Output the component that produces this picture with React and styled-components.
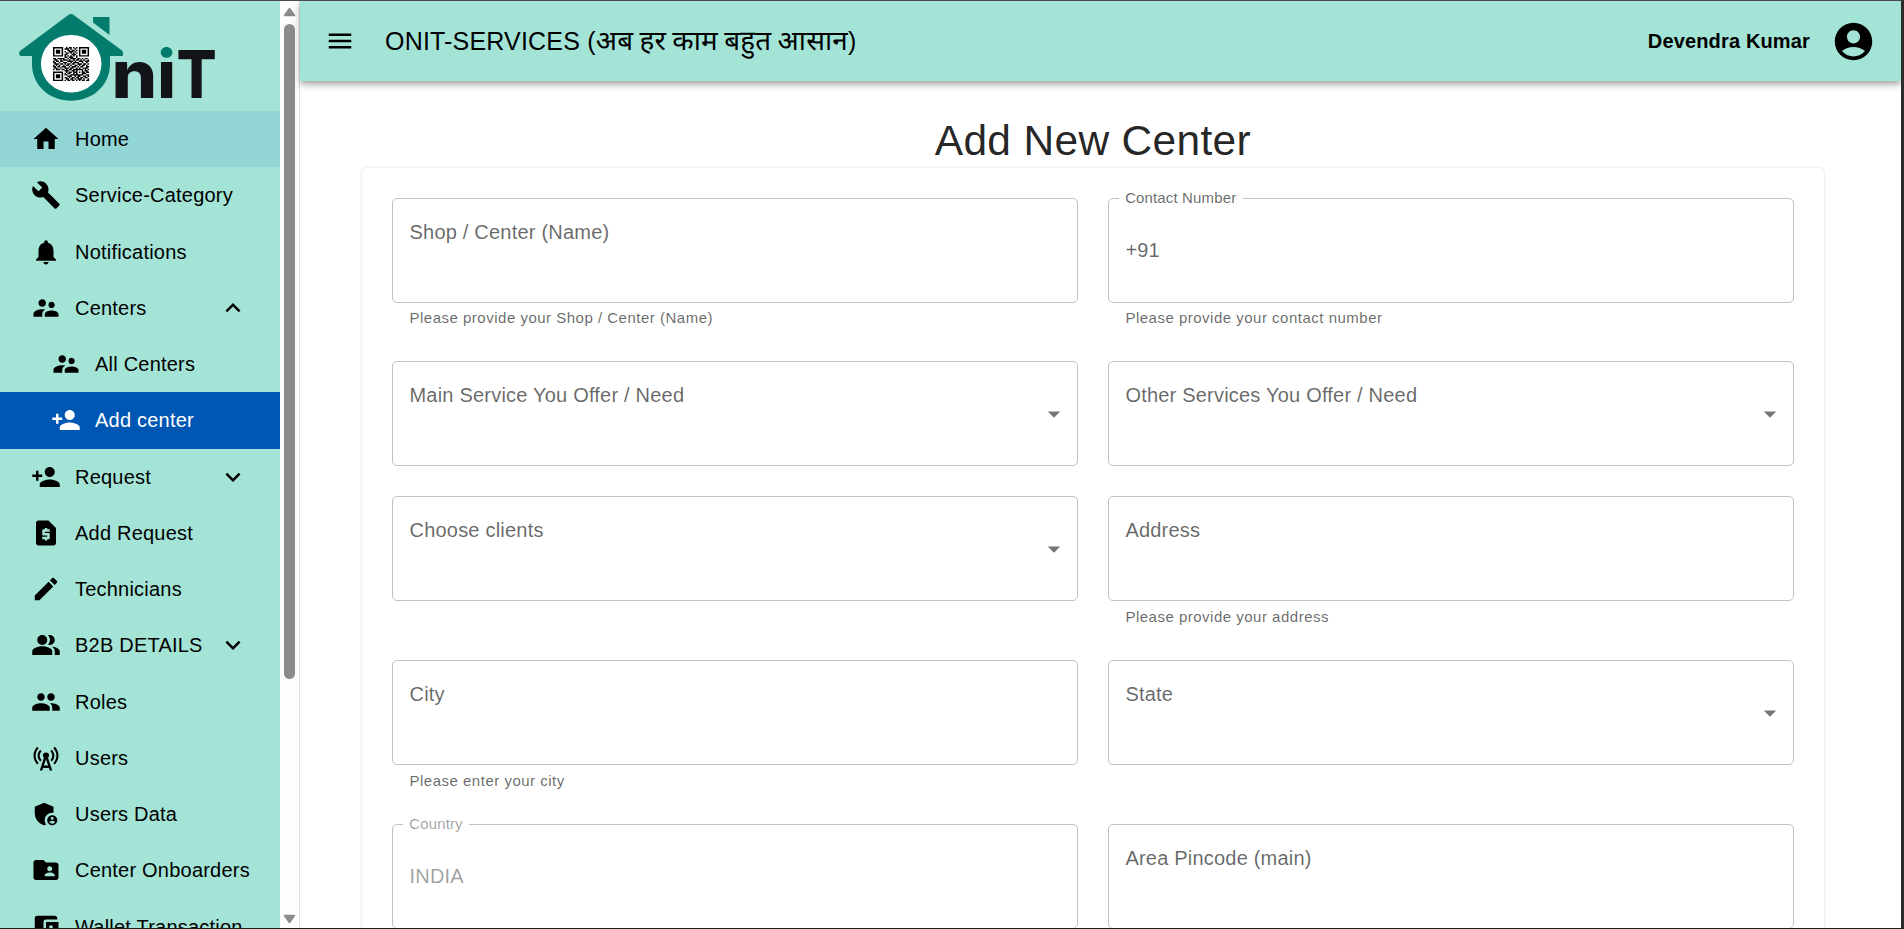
import React from "react";
import styled, { createGlobalStyle } from "styled-components";
import {
  MdHome, MdBuild, MdNotifications, MdSupervisorAccount, MdPersonAdd, MdRequestPage,
  MdEdit, MdPeopleAlt, MdPeople, MdCellTower, MdAdminPanelSettings, MdFolderShared,
  MdAccountBalanceWallet, MdExpandMore, MdExpandLess, MdMenu, MdAccountCircle, MdArrowDropDown,
} from "react-icons/md";

const MINT = "#a4e4d7";

const Global = createGlobalStyle`
  *, *::before, *::after { box-sizing: border-box; }
  body { margin: 0; background: #fff; font-family: "Liberation Sans", Arial, sans-serif; }
`;

const Frame = styled.div`
  display: flex;
  height: 929px;
  overflow: hidden;
  border: solid;
  border-width: 1px 3px 1px 0;
  border-color: #4a4a4c #2b2b2b #202020;
  letter-spacing: 0.00938em;
`;

const Sidebar = styled.aside`
  display: flex;
  flex: 0 0 300px;
  border-right: 1px solid #dfe0e0;
`;

const Drawer = styled.div`
  width: 280px;
  overflow: hidden;
  background: ${MINT};
`;

const LogoArea = styled.div`
  height: 110px;
  svg { display: block; overflow: visible; }
`;

const NavRow = styled.div`
  display: flex;
  align-items: center;
  height: 56.25px;
  padding: 0 32px 0 ${(p) => (p.$nested ? 51 : 31)}px;
  font-size: 20px;
  line-height: 30px;
  white-space: nowrap;
  color: ${(p) => (p.$tone === "active" ? "#fff" : "#000")};
  background: ${(p) => ({ active: "#0056b3", hover: "#91d5d4" })[p.$tone] || "transparent"};
  svg { flex: none; width: 30px; height: 30px; }
`;

const NavLabel = styled.span`
  flex: 1;
  margin-left: 14px;
  letter-spacing: 0.0108em;
`;

const ScrollTrack = styled.div`
  display: flex;
  flex-direction: column;
  align-items: center;
  width: 19px;
  padding: 6px 0 4px;
  background: #fdfefc;
`;

const ScrollThumb = styled.div`
  width: 11px;
  height: 655px;
  margin: 7px 0 auto;
  border-radius: 6px;
  background: #8b8b8b;
`;

const Main = styled.main`
  display: flex;
  flex: 1;
  flex-direction: column;
  min-width: 0;
`;

const AppBar = styled.header`
  display: flex;
  flex: none;
  align-items: center;
  height: 80px;
  padding: 0 25px;
  background: ${MINT};
  color: #000;
  box-shadow: 0 2.5px 5px -1px rgba(0, 0, 0, 0.2), 0 5px 6px rgba(0, 0, 0, 0.14),
    0 1px 12px rgba(0, 0, 0, 0.12);
`;

const BarTitle = styled.div`
  flex: 1;
  margin-left: 30px;
  font-size: 25px;
  line-height: 40px;
  letter-spacing: 0.0075em;
  white-space: nowrap;
`;

const Hindi = styled.span`
  font-family: "Noto Sans Devanagari", "Liberation Sans", sans-serif;
  font-size: 27.8px;
  line-height: 1;
  word-spacing: -1.1px;
`;

const UserName = styled.div`
  margin-right: 21px;
  font-size: 20px;
  font-weight: 700;
`;

const Content = styled.div`
  display: flex;
  flex: 1;
  flex-direction: column;
  min-height: 0;
  padding: 33px 77.25px 0 62px;
  overflow: hidden;
`;

const Heading = styled.h1`
  margin: 0;
  font-size: 42.5px;
  font-weight: 400;
  line-height: 53.53px;
  letter-spacing: 0.00735em;
  text-align: center;
  color: rgba(0, 0, 0, 0.87);
`;

const Card = styled.section`
  display: grid;
  flex: none;
  grid-template-columns: 1fr 1fr;
  gap: 30px;
  padding: 30px;
  border-radius: 5px;
  background: #fff;
  box-shadow: 0 2px 1px -1px rgba(0, 0, 0, 0.2), 0 1px 1px rgba(0, 0, 0, 0.1),
    0 0 3px rgba(0, 0, 0, 0.14);
`;

const Field = styled.div`
  color: rgba(0, 0, 0, ${(p) => (p.$disabled ? 0.38 : 0.6)});
`;

const Outline = styled.div`
  position: relative;
  display: flex;
  align-items: ${(p) => (p.$raised ? "center" : "flex-start")};
  height: 105px;
  padding: ${(p) => (p.$raised ? "0" : "19px")} 16.5px 0;
  border: 1px solid #c2c2c2;
  border-radius: 5px;
  font-size: 20px;
  line-height: 28.75px;
  letter-spacing: 0.0105em;
`;

const Floating = styled.label`
  position: absolute;
  top: -13px;
  left: 10px;
  padding: 0 6.25px;
  background: #fff;
  font-size: 15px;
  line-height: 24px;
  letter-spacing: 0.00938em;
`;

const SelectArrow = styled(MdArrowDropDown)`
  position: absolute;
  top: 36.8px;
  right: 8px;
  width: 30px;
  height: 30px;
  color: rgba(0, 0, 0, 0.54);
`;

const Helper = styled.p`
  height: 24.92px;
  margin: 3.75px 17.5px 0;
  font-size: 15px;
  line-height: 24.92px;
  letter-spacing: 0.03333em;
`;

const NAV = [
  { label: "Home", icon: MdHome, tone: "hover" },
  { label: "Service-Category", icon: MdBuild },
  { label: "Notifications", icon: MdNotifications },
  { label: "Centers", icon: MdSupervisorAccount, more: MdExpandLess },
  { label: "All Centers", icon: MdSupervisorAccount, nested: true },
  { label: "Add center", icon: MdPersonAdd, nested: true, tone: "active" },
  { label: "Request", icon: MdPersonAdd, more: MdExpandMore },
  { label: "Add Request", icon: MdRequestPage },
  { label: "Technicians", icon: MdEdit },
  { label: "B2B DETAILS", icon: MdPeopleAlt, more: MdExpandMore },
  { label: "Roles", icon: MdPeople },
  { label: "Users", icon: MdCellTower },
  { label: "Users Data", icon: MdAdminPanelSettings },
  { label: "Center Onboarders", icon: MdFolderShared },
  { label: "Wallet Transaction", icon: MdAccountBalanceWallet },
];

const FIELDS = [
  { label: "Shop / Center (Name)", helper: "Please provide your Shop / Center (Name)" },
  { label: "Contact Number", value: "+91", helper: "Please provide your contact number" },
  { label: "Main Service You Offer / Need", select: true },
  { label: "Other Services You Offer / Need", select: true },
  { label: "Choose clients", select: true },
  { label: "Address", helper: "Please provide your address" },
  { label: "City", helper: "Please enter your city" },
  { label: "State", select: true },
  { label: "Country", value: "INDIA", disabled: true },
  { label: "Area Pincode (main)" },
];

const QR = [
  "1111111001011010101111111",
  "1000001011101001001000001",
  "1011101000110110101011101",
  "1011101010011101001011101",
  "1011101001101010101011101",
  "1000001011000111001000001",
  "1111111010101010101111111",
  "0000000011011100100000000",
  "1101111100101111011010110",
  "0110010111010010110101001",
  "1011011000111101001110111",
  "1100100111001011110010010",
  "0111011010110110011101101",
  "1010100101101001101011010",
  "1101101110010111010110011",
  "0110010011101100101001110",
  "1011101101011011111110101",
  "0000000011100110100010110",
  "1111111001011011101011011",
  "1000001010110010100011100",
  "1011101011001111111110011",
  "1011101000111001011001101",
  "1011101011010110110110110",
  "1000001001101101011101001",
  "1111111010110110101011011",
];
const QR_PATH = QR.map((row, y) =>
  [...row].map((cell, x) => (cell === "1" ? `M${x} ${y}h1.04v1.04h-1.04z` : "")).join("")
).join("");

function Logo() {
  return (
    <svg width="280" height="110" viewBox="0 1 280 110">
      <defs>
        <linearGradient id="dot" gradientUnits="userSpaceOnUse" x1="0" y1="40" x2="0" y2="80">
          <stop offset="0.51" stopColor="#037c6e" />
          <stop offset="0.51" stopColor="#131419" />
        </linearGradient>
      </defs>
      <path
        fill="#037c6e"
        d="M69 14.6Q71 13.300 73 14.600L122 50.500Q124 53 122.500 56H110V64C110 86 92 100.700 71 100.700S32 86 32 64V56H20.500Q18 54 20 51Z"
      />
      <path fill="#037c6e" d="M93 17h16.500v18L93 22.500z" />
      <ellipse cx="71.200" cy="63.700" rx="30.300" ry="28.800" fill="#fff" />
      <path d={QR_PATH} fill="#000" transform="translate(53 47) scale(1.44 1.36)" />
      <g fontFamily="Inter, sans-serif" fontWeight="800" fontSize="66" letterSpacing="0" fill="#131419">
        <text transform="translate(111.500 98) scale(1.09 1)">n</text>
        <text x="157.200" y="98" fill="url(#dot)">i</text>
        <text transform="translate(176.500 98) scale(0.9 1)" fontWeight="850">T</text>
      </g>
    </svg>
  );
}

function ScrollArrow({ down }) {
  return (
    <svg width="13" height="10" viewBox="0 0 13 10">
      <path
        d={down ? "M1.500 1.500h10L6.500 8.500z" : "M1.500 8.500h10L6.500 1.500z"}
        fill="#8b8b8b" stroke="#8b8b8b" strokeWidth="1.500" strokeLinejoin="round"
      />
    </svg>
  );
}

function NavItem({ label, icon: Icon, more: More, nested, tone }) {
  return (
    <NavRow $nested={nested} $tone={tone}>
      <Icon />
      <NavLabel>{label}</NavLabel>
      {More && <More />}
    </NavRow>
  );
}

function FormField({ label, value, helper, select, disabled }) {
  return (
    <Field $disabled={disabled}>
      <Outline $raised={Boolean(value)}>
        {value ? <Floating>{label}</Floating> : null}
        <span>{value || label}</span>
        {select && <SelectArrow />}
      </Outline>
      {helper && <Helper>{helper}</Helper>}
    </Field>
  );
}

export default function App() {
  return (
    <>
      <Global />
      <Frame>
        <Sidebar>
          <Drawer>
            <LogoArea><Logo /></LogoArea>
            {NAV.map((item) => <NavItem key={item.label} {...item} />)}
          </Drawer>
          <ScrollTrack>
            <ScrollArrow />
            <ScrollThumb />
            <ScrollArrow down />
          </ScrollTrack>
        </Sidebar>
        <Main>
          <AppBar>
            <MdMenu size={30} />
            <BarTitle>ONIT-SERVICES (<Hindi>अब हर काम बहुत आसान</Hindi>)</BarTitle>
            <UserName>Devendra Kumar</UserName>
            <MdAccountCircle size={45} />
          </AppBar>
          <Content>
            <Heading>Add New Center</Heading>
            <Card>
              {FIELDS.map((field) => <FormField key={field.label} {...field} />)}
            </Card>
          </Content>
        </Main>
      </Frame>
    </>
  );
}
